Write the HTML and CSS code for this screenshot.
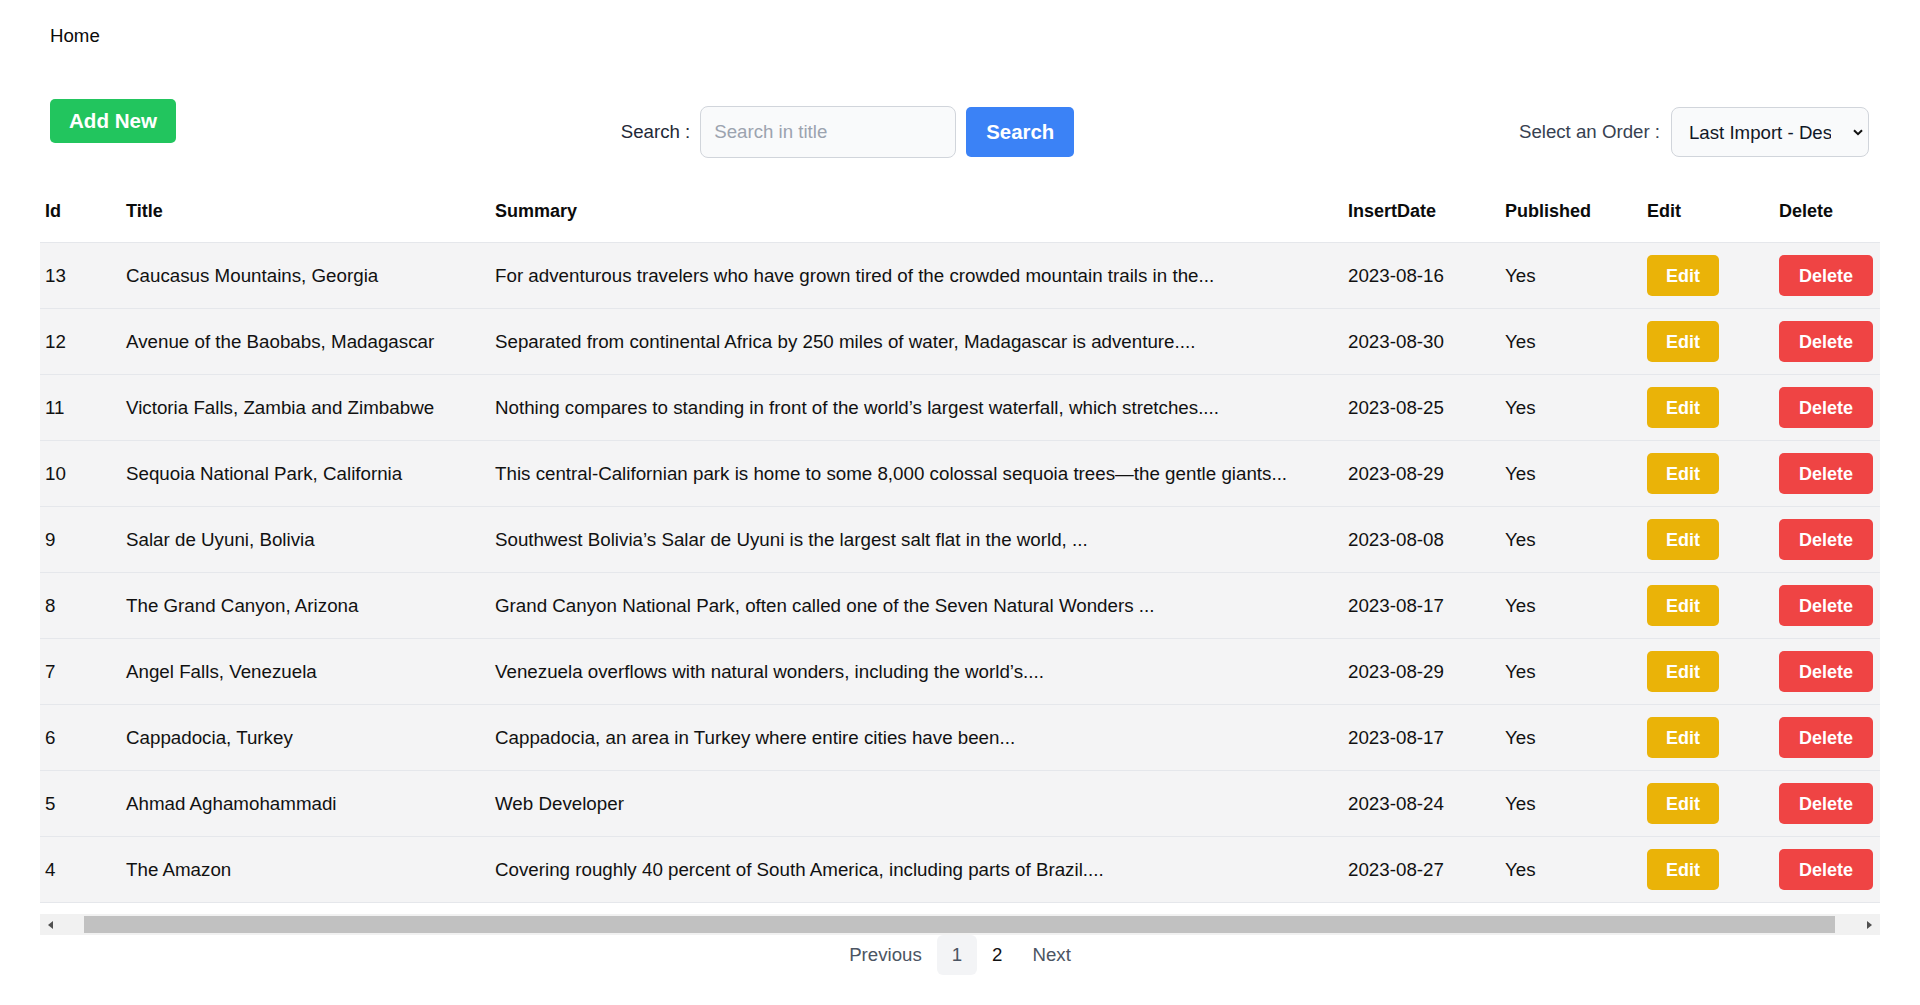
FILE: index.html
```html
<!DOCTYPE html>
<html lang="en">
<head>
<meta charset="utf-8">
<title>Home</title>
<link rel="stylesheet" href="styles.css">
</head>
<body>
<nav class="nav"><a class="nav-link" href="#">Home</a></nav>

<div class="toolbar">
  <button class="btn btn-green">Add New</button>
  <form class="search-group">
    <label class="label" for="q">Search :</label>
    <input id="q" class="input" type="text" placeholder="Search in title">
    <button type="button" class="btn btn-blue">Search</button>
  </form>
  <div class="order-group">
    <label class="label label-muted" for="order">Select an Order :</label>
    <div class="select-wrap">
      <select id="order" class="select">
        <option>Last Import - Desc</option>
        <option>Last Import - Asc</option>
      </select>
      <svg class="chevron" width="10" height="7" viewBox="0 0 10 7"><path d="M1 1.2 L5 5.2 L9 1.2" fill="none" stroke="#111" stroke-width="2"/></svg>
    </div>
  </div>
</div>

<div class="table-wrap">
  <table class="table">
    <colgroup>
      <col class="c-id"><col class="c-title"><col class="c-summary"><col class="c-date"><col class="c-pub"><col class="c-edit"><col class="c-del">
    </colgroup>
    <thead>
      <tr><th class="first">Id</th><th>Title</th><th>Summary</th><th>InsertDate</th><th>Published</th><th>Edit</th><th>Delete</th></tr>
    </thead>
    <tbody>
      <tr><td class="first">13</td><td>Caucasus Mountains, Georgia</td><td>For adventurous travelers who have grown tired of the crowded mountain trails in the...</td><td>2023-08-16</td><td>Yes</td><td><button class="btn btn-sm btn-yellow">Edit</button></td><td><button class="btn btn-sm btn-red">Delete</button></td></tr>
      <tr><td class="first">12</td><td>Avenue of the Baobabs, Madagascar</td><td>Separated from continental Africa by 250 miles of water, Madagascar is adventure....</td><td>2023-08-30</td><td>Yes</td><td><button class="btn btn-sm btn-yellow">Edit</button></td><td><button class="btn btn-sm btn-red">Delete</button></td></tr>
      <tr><td class="first">11</td><td>Victoria Falls, Zambia and Zimbabwe</td><td>Nothing compares to standing in front of the world’s largest waterfall, which stretches....</td><td>2023-08-25</td><td>Yes</td><td><button class="btn btn-sm btn-yellow">Edit</button></td><td><button class="btn btn-sm btn-red">Delete</button></td></tr>
      <tr><td class="first">10</td><td>Sequoia National Park, California</td><td>This central-Californian park is home to some 8,000 colossal sequoia trees—the gentle giants...</td><td>2023-08-29</td><td>Yes</td><td><button class="btn btn-sm btn-yellow">Edit</button></td><td><button class="btn btn-sm btn-red">Delete</button></td></tr>
      <tr><td class="first">9</td><td>Salar de Uyuni, Bolivia</td><td>Southwest Bolivia’s Salar de Uyuni is the largest salt flat in the world, ...</td><td>2023-08-08</td><td>Yes</td><td><button class="btn btn-sm btn-yellow">Edit</button></td><td><button class="btn btn-sm btn-red">Delete</button></td></tr>
      <tr><td class="first">8</td><td>The Grand Canyon, Arizona</td><td>Grand Canyon National Park, often called one of the Seven Natural Wonders ...</td><td>2023-08-17</td><td>Yes</td><td><button class="btn btn-sm btn-yellow">Edit</button></td><td><button class="btn btn-sm btn-red">Delete</button></td></tr>
      <tr><td class="first">7</td><td>Angel Falls, Venezuela</td><td>Venezuela overflows with natural wonders, including the world’s....</td><td>2023-08-29</td><td>Yes</td><td><button class="btn btn-sm btn-yellow">Edit</button></td><td><button class="btn btn-sm btn-red">Delete</button></td></tr>
      <tr><td class="first">6</td><td>Cappadocia, Turkey</td><td>Cappadocia, an area in Turkey where entire cities have been...</td><td>2023-08-17</td><td>Yes</td><td><button class="btn btn-sm btn-yellow">Edit</button></td><td><button class="btn btn-sm btn-red">Delete</button></td></tr>
      <tr><td class="first">5</td><td>Ahmad Aghamohammadi</td><td>Web Developer</td><td>2023-08-24</td><td>Yes</td><td><button class="btn btn-sm btn-yellow">Edit</button></td><td><button class="btn btn-sm btn-red">Delete</button></td></tr>
      <tr><td class="first">4</td><td>The Amazon</td><td>Covering roughly 40 percent of South America, including parts of Brazil....</td><td>2023-08-27</td><td>Yes</td><td><button class="btn btn-sm btn-yellow">Edit</button></td><td><button class="btn btn-sm btn-red">Delete</button></td></tr>
    </tbody>
  </table>
</div>

<div class="scrollbar" aria-hidden="true">
  <div class="sb-btn"><span class="arrow arrow-left"></span></div>
  <div class="sb-track"><div class="sb-thumb"></div></div>
  <div class="sb-btn"><span class="arrow arrow-right"></span></div>
</div>

<nav class="pagination">
  <a class="page page-muted" href="#">Previous</a>
  <a class="page page-muted page-active" href="#">1</a>
  <a class="page" href="#">2</a>
  <a class="page page-muted" href="#">Next</a>
</nav>
</body>
</html>
```

FILE: styles.css
```css
* { box-sizing: border-box; }

html, body {
  margin: 0;
  padding: 0;
  background: #ffffff;
}

body {
  font-family: "Liberation Sans", Arial, sans-serif;
  font-size: 18.67px;
  color: #111827;
}

.nav {
  padding: 22px 50px 0;
  line-height: 28px;
  height: 50px;
}

.nav-link {
  color: #0b0b0b;
  text-decoration: none;
  font-size: 18.67px;
}

.toolbar {
  display: flex;
  justify-content: space-between;
  align-items: flex-start;
  margin-top: 49px;
  padding: 0 51px 0 50px;
}

.btn {
  font-family: "Liberation Sans", Arial, sans-serif;
  font-weight: 700;
  color: #ffffff;
  border: 0;
  border-radius: 5px;
  cursor: pointer;
  line-height: 1;
}

.btn-green {
  background: #22c55e;
  height: 44px;
  padding: 0 19px;
  font-size: 20.6px;
}

.btn-blue {
  background: #3b82f6;
  height: 50px;
  padding: 0 20px;
  font-size: 20.4px;
}

.search-group {
  display: flex;
  align-items: center;
  gap: 10px;
  margin: 7px 0 0 0;
}

.label {
  color: #1f2937;
  font-size: 18.67px;
}

.label-muted {
  color: #374151;
}

.input {
  width: 256px;
  height: 52px;
  border: 1px solid #d1d5db;
  border-radius: 8px;
  background: #f9fafb;
  padding: 0 13px;
  font-family: "Liberation Sans", Arial, sans-serif;
  font-size: 18.67px;
  color: #111827;
  outline: none;
}

.input::placeholder {
  color: #9ca3af;
}

.order-group {
  display: flex;
  align-items: center;
  gap: 11px;
  margin-top: 8px;
}

.select-wrap {
  position: relative;
  width: 198px;
  height: 50px;
}

.select {
  -webkit-appearance: none;
  appearance: none;
  width: 198px;
  height: 50px;
  border: 1px solid #d1d5db;
  border-radius: 8px;
  background: #f9fafb;
  padding: 0 37px 0 17px;
  font-family: "Liberation Sans", Arial, sans-serif;
  font-size: 18.67px;
  color: #111827;
  outline: none;
}

.chevron {
  position: absolute;
  right: 6px;
  top: 22px;
  pointer-events: none;
}

.table-wrap {
  margin: 19px 40px 0;
  overflow: hidden;
}

.table {
  width: 1840px;
  table-layout: fixed;
  border-collapse: separate;
  border-spacing: 0;
}

.c-id { width: 62px; }
.c-title { width: 369px; }
.c-summary { width: 853px; }
.c-date { width: 157px; }
.c-pub { width: 142px; }
.c-edit { width: 132px; }
.c-del { width: 125px; }

.table th,
.table td {
  height: 66px;
  padding: 0 0 0 24px;
  text-align: left;
  vertical-align: middle;
  border-bottom: 1px solid #e5e7eb;
  white-space: nowrap;
}

.table th {
  padding-top: 3px;
  font-weight: 700;
  font-size: 18px;
  color: #0b0b0b;
  background: #ffffff;
}

.table td {
  font-size: 18.75px;
  color: #111111;
  background: #f4f4f5;
}

.table .first { padding-left: 5px; }

.btn-sm {
  height: 41px;
  font-size: 18px;
  padding: 0 20px;
}

.btn-yellow {
  background: #eab308;
  padding: 0 19px;
}

.btn-red {
  background: #ef4444;
}

.scrollbar {
  display: flex;
  height: 21px;
  margin: 11px 40px 0;
  background: #f1f1f1;
}

.sb-btn {
  width: 21px;
  height: 21px;
  flex: 0 0 21px;
  display: flex;
  align-items: center;
  justify-content: center;
}

.arrow {
  width: 0;
  height: 0;
  border-top: 4.5px solid transparent;
  border-bottom: 4.5px solid transparent;
}

.arrow-left {
  border-right: 5px solid #505050;
}

.arrow-right {
  border-left: 5px solid #505050;
}

.sb-track {
  flex: 1;
  padding: 2px 0;
}

.sb-thumb {
  height: 17px;
  width: 1751px;
  margin-left: 23px;
  background: #c1c1c1;
}

.pagination {
  display: flex;
  justify-content: center;
  align-items: center;
}

.page {
  height: 40px;
  min-width: 40px;
  padding: 0 15px;
  display: flex;
  align-items: center;
  justify-content: center;
  font-size: 18.67px;
  color: #111111;
  text-decoration: none;
  border-radius: 6px;
}

.page-muted {
  color: #4b5563;
}

.page-active {
  background: #f3f4f6;
}
```
